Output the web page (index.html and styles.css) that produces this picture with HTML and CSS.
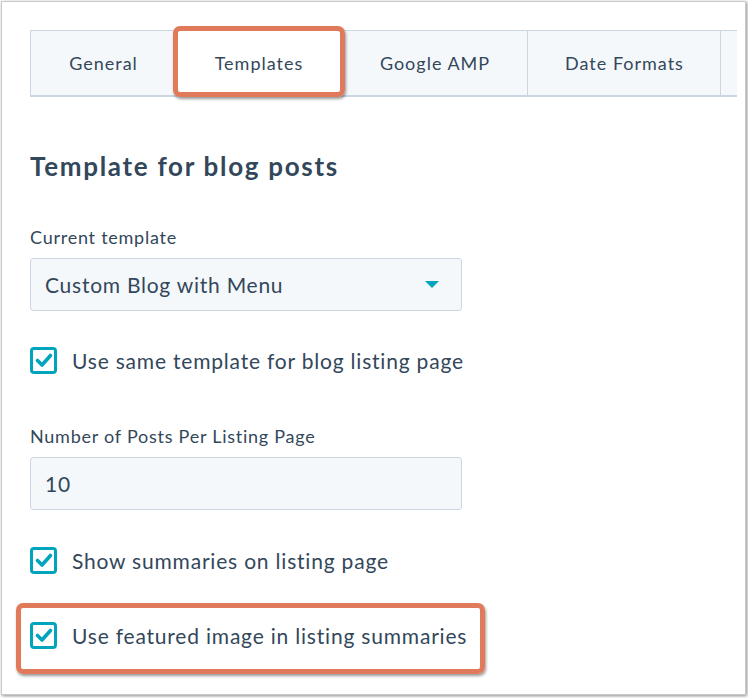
FILE: index.html
```html
<!DOCTYPE html>
<html>
<head>
<meta charset="utf-8">
<link rel="stylesheet" href="styles.css">
</head>
<body>
<div class="window">
  <div class="tabs">
    <div class="tab">General</div>
    <div class="tab active">Templates</div>
    <div class="tab">Google AMP</div>
    <div class="tab">Date Formats</div>
    <div class="tab rest"></div>
  </div>

  <h2 class="heading">Template for blog posts</h2>

  <div class="field">
    <div class="label">Current template</div>
    <div class="select">
      <span>Custom Blog with Menu</span>
      <span class="caret"></span>
    </div>
  </div>

  <div class="check-row first">
    <span class="box"><svg viewBox="0 0 20 20" width="20" height="20"><path d="M3.5 10.5 L8 15 L16.5 5.5" fill="none" stroke="#00a4bd" stroke-width="3.6" stroke-linecap="round" stroke-linejoin="round"/></svg></span>
    <span class="check-label">Use same template for blog listing page</span>
  </div>

  <div class="field second">
    <div class="label">Number of Posts Per Listing Page</div>
    <div class="input">10</div>
  </div>

  <div class="check-row third">
    <span class="box"><svg viewBox="0 0 20 20" width="20" height="20"><path d="M3.5 10.5 L8 15 L16.5 5.5" fill="none" stroke="#00a4bd" stroke-width="3.6" stroke-linecap="round" stroke-linejoin="round"/></svg></span>
    <span class="check-label">Show summaries on listing page</span>
  </div>

  <div class="check-row fourth highlight">
    <span class="box"><svg viewBox="0 0 20 20" width="20" height="20"><path d="M3.5 10.5 L8 15 L16.5 5.5" fill="none" stroke="#00a4bd" stroke-width="3.6" stroke-linecap="round" stroke-linejoin="round"/></svg></span>
    <span class="check-label">Use featured image in listing summaries</span>
  </div>
</div>
</body>
</html>
```

FILE: styles.css
```css
* { box-sizing: border-box; }
html, body { margin: 0; padding: 0; background: #fff; }
body {
  font-family: Lato, "Open Sans", sans-serif;
  color: #33475b;
  width: 748px;
  height: 698px;
  overflow: hidden;
}
.window {
  margin: 1px 0 0 1px;
  width: 745px;
  height: 694px;
  border: 1px solid #c9c9c9;
  box-shadow: 1px 1px 3px rgba(0,0,0,0.45);
  padding: 28px 0 0 28px;
  overflow: hidden;
}
.tabs {
  display: flex;
  width: 707px;
  height: 67px;
  background: #f5f8fa;
  border-top: 1px solid #cbd6e2;
  border-bottom: 2px solid #cbd6e2;
  border-left: 1px solid #cbd6e2;
}
.tab {
  display: flex;
  align-items: center;
  justify-content: center;
  font-size: 18px;
  letter-spacing: 1px;
  text-indent: 1px;
  color: #33475b;
  border-right: 1px solid #cbd6e2;
  white-space: nowrap;
}
.tab:nth-child(1) { width: 144px; border-right: none; }
.tab:nth-child(2) { width: 167px; border-right: none; }
.tab:nth-child(3) { width: 186px; }
.tab:nth-child(4) { width: 193px; }
.tab.rest { flex: 1; border-right: none; }
.tab.active {
  background: #fff;
  position: relative;
}
.tab.active::after {
  content: "";
  position: absolute;
  left: -2px;
  right: -3px;
  top: -5px;
  bottom: -2px;
  border: 5px solid #e07a5a;
  border-radius: 7px;
  box-shadow: 1px 2px 3px rgba(0,0,0,0.4);
}
.heading {
  margin: 53px 0 0 0;
  font-size: 26px;
  line-height: 32px;
  font-weight: 700;
  letter-spacing: 1.7px;
  color: #33475b;
}
.field { margin-top: 44px; }
.label {
  font-size: 18px;
  line-height: 22px;
  letter-spacing: 0.75px;
}
.select, .input {
  margin-top: 10px;
  width: 432px;
  height: 53px;
  background: #f5f8fa;
  border: 1px solid #cbd6e2;
  border-radius: 3px;
  display: flex;
  align-items: center;
  justify-content: space-between;
  padding: 0 22px 0 14px;
  font-size: 21px;
  letter-spacing: 0.75px;
}
.caret {
  width: 0;
  height: 0;
  border-left: 7px solid transparent;
  border-right: 7px solid transparent;
  border-top: 7px solid #00a4bd;
}
.check-row {
  display: flex;
  align-items: center;
  height: 28px;
}
.check-row.first { margin-top: 35px; }
.field.second { margin-top: 51px; }
.check-row.third { margin-top: 36px; }
.check-row.fourth { margin-top: 47px; }
.box {
  width: 27px;
  height: 27px;
  border: 3px solid #00a4bd;
  border-radius: 4px;
  background: #fff;
  display: flex;
  align-items: center;
  justify-content: center;
  flex-shrink: 0;
}
.box svg { display: block; }
.check-label {
  margin-left: 15px;
  font-size: 21px;
  letter-spacing: 0.8px;
  white-space: nowrap;
}
.highlight { position: relative; }
.highlight::after {
  content: "";
  position: absolute;
  left: -14px;
  width: 459px;
  top: -18px;
  height: 61px;
  border: 5px solid #e07a5a;
  border-radius: 7px;
  box-shadow: 1px 2px 3px rgba(0,0,0,0.4);
}
```
